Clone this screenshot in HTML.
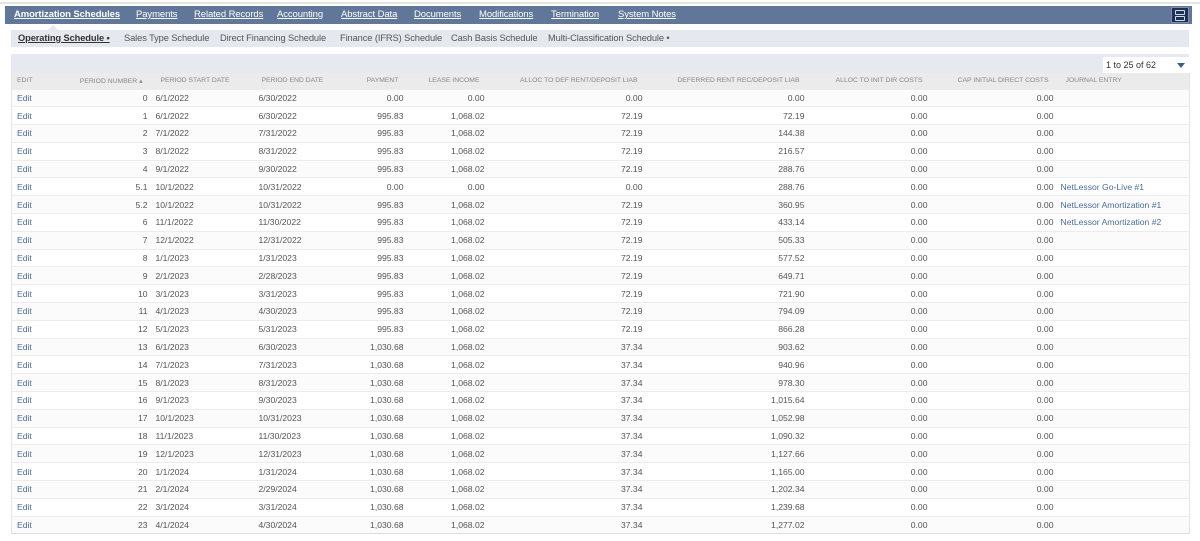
<!DOCTYPE html>
<html><head><meta charset="utf-8"><style>
*{margin:0;padding:0;box-sizing:border-box}
body{width:1200px;height:541px;background:#fff;font-family:"Liberation Sans",sans-serif;position:relative;overflow:hidden;color:#444}
.topline{position:absolute;left:0;top:2px;width:1200px;height:2px;background:#e4e4e4}
.nav{position:absolute;left:5px;top:6px;width:1187px;height:18px;background:#607799}
.nav span{position:absolute;top:3px;font-size:9.5px;color:#fff;text-decoration:underline;text-decoration-thickness:1px;text-underline-offset:1px;letter-spacing:-0.1px}
.nav .b{font-weight:bold}
.tri{position:absolute;left:42px;top:19px;width:0;height:0;border-left:6px solid transparent;border-right:6px solid transparent;border-bottom:6px solid #e5e8ee}
.ham{position:absolute;left:1166px;top:1px;width:18px;height:16px;background:#1f3152;border:1px solid #7b8fb0}
.ham i{position:absolute;left:3px;width:10px;height:5px;border:1px solid #cfd8e6;border-radius:1px}
.sub{position:absolute;left:11px;top:30px;width:1178px;height:17px;background:#e5e8ee}
.sub span{position:absolute;top:3px;font-size:9.3px;color:#555;letter-spacing:-0.1px}
.sub .b{font-weight:bold;color:#333;text-decoration:underline}
.tool{position:absolute;left:11px;top:54px;width:1178px;height:19px;background:#e6e9ef}
.dd{position:absolute;left:1103px;top:57px;width:86px;height:16px;background:#fff;font-size:9px;padding:3px 0 0 3px;color:#333}
.dd b{position:absolute;right:4px;top:6px;border-left:4px solid transparent;border-right:4px solid transparent;border-top:5px solid #3d5d96}
table{position:absolute;left:11px;top:73px;border-collapse:collapse;table-layout:fixed;width:1178px;font-size:8.6px;border-left:1px solid #e4e4e4;border-right:1px solid #e4e4e4;border-bottom:1px solid #ddd}
th{height:16px;background:#ebebeb;font-weight:normal;color:#888;font-size:6.8px;text-align:right;padding-right:8px;white-space:nowrap}
td{height:17.8px;border-top:1px solid #ececec;text-align:right;padding-right:3px;white-space:nowrap;color:#555}
tr:nth-child(odd) td{background:#fff}
tr:nth-child(even) td{background:#fbfbfc}
td.l,th.l{text-align:left;padding-left:5px}
td.e{color:#4a6c9b;text-align:left;padding-left:5px}
td.j{color:#4a6c9b;text-align:left;padding-left:4px}
</style></head><body>
<div class="topline"></div>
<div class="nav">
<span class="b" style="left:9px">Amortization Schedules</span>
<span style="left:131px">Payments</span>
<span style="left:189px">Related Records</span>
<span style="left:272px">Accounting</span>
<span style="left:336px">Abstract Data</span>
<span style="left:409px">Documents</span>
<span style="left:474px">Modifications</span>
<span style="left:546px">Termination</span>
<span style="left:613px">System Notes</span>
<div class="tri"></div>
<div class="ham"><i style="top:2px"></i><i style="top:8px"></i></div>
</div>
<div class="sub">
<span class="b" style="left:7px">Operating Schedule •</span>
<span style="left:113px">Sales Type Schedule</span>
<span style="left:209px">Direct Financing Schedule</span>
<span style="left:329px">Finance (IFRS) Schedule</span>
<span style="left:440px">Cash Basis Schedule</span>
<span style="left:537px">Multi-Classification Schedule •</span>
</div>
<div class="tool"></div>
<div class="dd">1 to 25 of 62<b></b></div>
<table>
<colgroup><col style="width:49px"><col style="width:90px"><col style="width:103px"><col style="width:77px"><col style="width:76px"><col style="width:81px"><col style="width:158px"><col style="width:162px"><col style="width:123px"><col style="width:126px"><col style="width:133px"></colgroup>
<tr><th class="l">EDIT</th><th>PERIOD NUMBER ▴</th><th class="l" style="padding-left:10px">PERIOD START DATE</th><th class="l" style="padding-left:8px">PERIOD END DATE</th><th>PAYMENT</th><th>LEASE INCOME</th><th>ALLOC TO DEF RENT/DEPOSIT LIAB</th><th>DEFERRED RENT REC/DEPOSIT LIAB</th><th>ALLOC TO INIT DIR COSTS</th><th>CAP INITIAL DIRECT COSTS</th><th class="l" style="padding-left:9px">JOURNAL ENTRY</th></tr>
<tr><td class="e">Edit</td><td>0</td><td class="l">6/1/2022</td><td class="l">6/30/2022</td><td>0.00</td><td>0.00</td><td>0.00</td><td>0.00</td><td>0.00</td><td>0.00</td><td class="j"></td></tr>
<tr><td class="e">Edit</td><td>1</td><td class="l">6/1/2022</td><td class="l">6/30/2022</td><td>995.83</td><td>1,068.02</td><td>72.19</td><td>72.19</td><td>0.00</td><td>0.00</td><td class="j"></td></tr>
<tr><td class="e">Edit</td><td>2</td><td class="l">7/1/2022</td><td class="l">7/31/2022</td><td>995.83</td><td>1,068.02</td><td>72.19</td><td>144.38</td><td>0.00</td><td>0.00</td><td class="j"></td></tr>
<tr><td class="e">Edit</td><td>3</td><td class="l">8/1/2022</td><td class="l">8/31/2022</td><td>995.83</td><td>1,068.02</td><td>72.19</td><td>216.57</td><td>0.00</td><td>0.00</td><td class="j"></td></tr>
<tr><td class="e">Edit</td><td>4</td><td class="l">9/1/2022</td><td class="l">9/30/2022</td><td>995.83</td><td>1,068.02</td><td>72.19</td><td>288.76</td><td>0.00</td><td>0.00</td><td class="j"></td></tr>
<tr><td class="e">Edit</td><td>5.1</td><td class="l">10/1/2022</td><td class="l">10/31/2022</td><td>0.00</td><td>0.00</td><td>0.00</td><td>288.76</td><td>0.00</td><td>0.00</td><td class="j">NetLessor Go-Live #1</td></tr>
<tr><td class="e">Edit</td><td>5.2</td><td class="l">10/1/2022</td><td class="l">10/31/2022</td><td>995.83</td><td>1,068.02</td><td>72.19</td><td>360.95</td><td>0.00</td><td>0.00</td><td class="j">NetLessor Amortization #1</td></tr>
<tr><td class="e">Edit</td><td>6</td><td class="l">11/1/2022</td><td class="l">11/30/2022</td><td>995.83</td><td>1,068.02</td><td>72.19</td><td>433.14</td><td>0.00</td><td>0.00</td><td class="j">NetLessor Amortization #2</td></tr>
<tr><td class="e">Edit</td><td>7</td><td class="l">12/1/2022</td><td class="l">12/31/2022</td><td>995.83</td><td>1,068.02</td><td>72.19</td><td>505.33</td><td>0.00</td><td>0.00</td><td class="j"></td></tr>
<tr><td class="e">Edit</td><td>8</td><td class="l">1/1/2023</td><td class="l">1/31/2023</td><td>995.83</td><td>1,068.02</td><td>72.19</td><td>577.52</td><td>0.00</td><td>0.00</td><td class="j"></td></tr>
<tr><td class="e">Edit</td><td>9</td><td class="l">2/1/2023</td><td class="l">2/28/2023</td><td>995.83</td><td>1,068.02</td><td>72.19</td><td>649.71</td><td>0.00</td><td>0.00</td><td class="j"></td></tr>
<tr><td class="e">Edit</td><td>10</td><td class="l">3/1/2023</td><td class="l">3/31/2023</td><td>995.83</td><td>1,068.02</td><td>72.19</td><td>721.90</td><td>0.00</td><td>0.00</td><td class="j"></td></tr>
<tr><td class="e">Edit</td><td>11</td><td class="l">4/1/2023</td><td class="l">4/30/2023</td><td>995.83</td><td>1,068.02</td><td>72.19</td><td>794.09</td><td>0.00</td><td>0.00</td><td class="j"></td></tr>
<tr><td class="e">Edit</td><td>12</td><td class="l">5/1/2023</td><td class="l">5/31/2023</td><td>995.83</td><td>1,068.02</td><td>72.19</td><td>866.28</td><td>0.00</td><td>0.00</td><td class="j"></td></tr>
<tr><td class="e">Edit</td><td>13</td><td class="l">6/1/2023</td><td class="l">6/30/2023</td><td>1,030.68</td><td>1,068.02</td><td>37.34</td><td>903.62</td><td>0.00</td><td>0.00</td><td class="j"></td></tr>
<tr><td class="e">Edit</td><td>14</td><td class="l">7/1/2023</td><td class="l">7/31/2023</td><td>1,030.68</td><td>1,068.02</td><td>37.34</td><td>940.96</td><td>0.00</td><td>0.00</td><td class="j"></td></tr>
<tr><td class="e">Edit</td><td>15</td><td class="l">8/1/2023</td><td class="l">8/31/2023</td><td>1,030.68</td><td>1,068.02</td><td>37.34</td><td>978.30</td><td>0.00</td><td>0.00</td><td class="j"></td></tr>
<tr><td class="e">Edit</td><td>16</td><td class="l">9/1/2023</td><td class="l">9/30/2023</td><td>1,030.68</td><td>1,068.02</td><td>37.34</td><td>1,015.64</td><td>0.00</td><td>0.00</td><td class="j"></td></tr>
<tr><td class="e">Edit</td><td>17</td><td class="l">10/1/2023</td><td class="l">10/31/2023</td><td>1,030.68</td><td>1,068.02</td><td>37.34</td><td>1,052.98</td><td>0.00</td><td>0.00</td><td class="j"></td></tr>
<tr><td class="e">Edit</td><td>18</td><td class="l">11/1/2023</td><td class="l">11/30/2023</td><td>1,030.68</td><td>1,068.02</td><td>37.34</td><td>1,090.32</td><td>0.00</td><td>0.00</td><td class="j"></td></tr>
<tr><td class="e">Edit</td><td>19</td><td class="l">12/1/2023</td><td class="l">12/31/2023</td><td>1,030.68</td><td>1,068.02</td><td>37.34</td><td>1,127.66</td><td>0.00</td><td>0.00</td><td class="j"></td></tr>
<tr><td class="e">Edit</td><td>20</td><td class="l">1/1/2024</td><td class="l">1/31/2024</td><td>1,030.68</td><td>1,068.02</td><td>37.34</td><td>1,165.00</td><td>0.00</td><td>0.00</td><td class="j"></td></tr>
<tr><td class="e">Edit</td><td>21</td><td class="l">2/1/2024</td><td class="l">2/29/2024</td><td>1,030.68</td><td>1,068.02</td><td>37.34</td><td>1,202.34</td><td>0.00</td><td>0.00</td><td class="j"></td></tr>
<tr><td class="e">Edit</td><td>22</td><td class="l">3/1/2024</td><td class="l">3/31/2024</td><td>1,030.68</td><td>1,068.02</td><td>37.34</td><td>1,239.68</td><td>0.00</td><td>0.00</td><td class="j"></td></tr>
<tr><td class="e">Edit</td><td>23</td><td class="l">4/1/2024</td><td class="l">4/30/2024</td><td>1,030.68</td><td>1,068.02</td><td>37.34</td><td>1,277.02</td><td>0.00</td><td>0.00</td><td class="j"></td></tr>
</table>
</body></html>
